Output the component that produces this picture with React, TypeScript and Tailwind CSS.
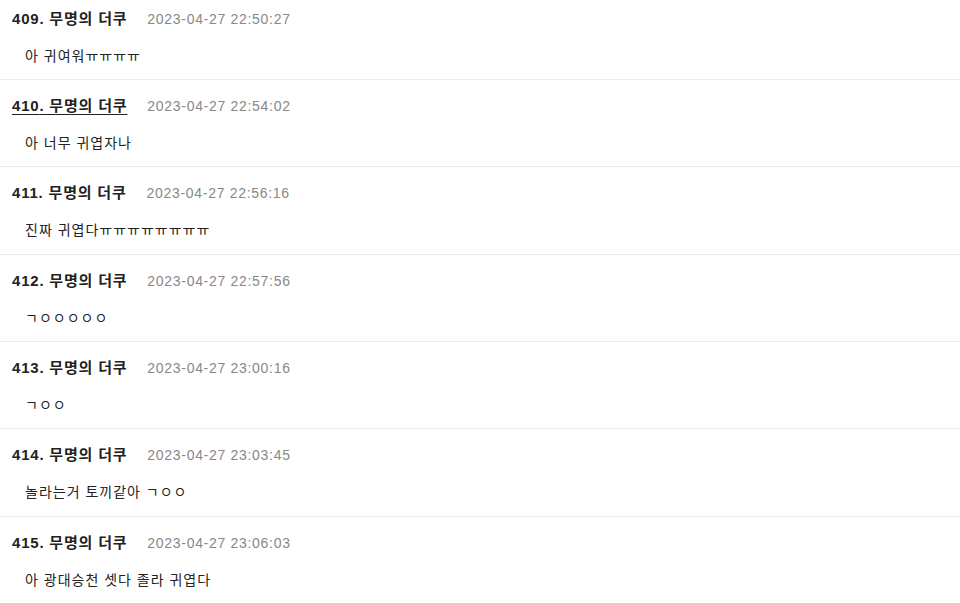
const comments = [
  { no: 409, date: "2023-04-27 22:50:27", text: "아 귀여워ㅠㅠㅠㅠ" },
  { no: 410, date: "2023-04-27 22:54:02", text: "아 너무 귀엽자나", hover: true },
  { no: 411, date: "2023-04-27 22:56:16", text: "진짜 귀엽다ㅠㅠㅠㅠㅠㅠㅠㅠ" },
  { no: 412, date: "2023-04-27 22:57:56", text: "ㄱㅇㅇㅇㅇㅇ" },
  { no: 413, date: "2023-04-27 23:00:16", text: "ㄱㅇㅇ" },
  { no: 414, date: "2023-04-27 23:03:45", text: "놀라는거 토끼같아 ㄱㅇㅇ" },
  { no: 415, date: "2023-04-27 23:06:03", text: "아 광대승천 셋다 졸라 귀엽다" },
];

export default function App() {
  return (
    <div
      className="h-[603px] w-[960px] overflow-hidden bg-white"
      style={{ fontFamily: '"Liberation Sans", "Noto Sans CJK KR", sans-serif' }}
    >
      <div className="-mt-[7.33px]">
        {comments.map((c) => (
          <div key={c.no} className="flex h-[87.33px] flex-col border-b border-[#ececec]">
            <div className="mt-[15px] flex items-center pl-3 leading-[22px]">
              <span
                className={`text-[15px] font-bold tracking-[0.8px] text-[#222] ${c.hover ? "underline underline-offset-[3px]" : ""}`}
              >
                {c.no}. 무명의 더쿠
              </span>
              <span className="ml-[20px] text-[14px] tracking-[0.7px] text-[#888]">{c.date}</span>
            </div>
            <div className="mt-[15px] pl-[25px] text-[14px] leading-[22px] tracking-[1px] text-[#222]">
              {c.text}
            </div>
          </div>
        ))}
      </div>
    </div>
  );
}
